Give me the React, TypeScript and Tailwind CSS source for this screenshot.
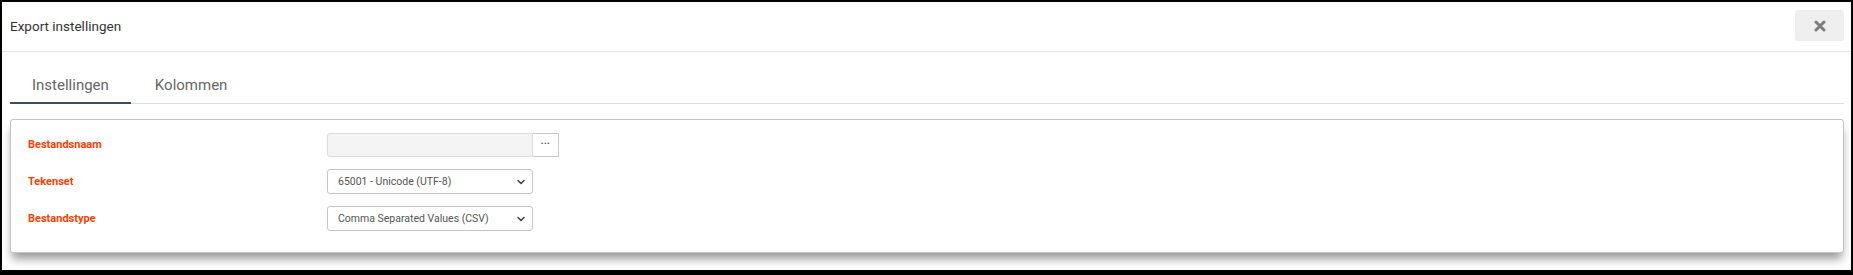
const FIELDS = [
  { label: "Bestandsnaam", kind: "file" as const, value: "" },
  { label: "Tekenset", kind: "select" as const, value: "65001 - Unicode (UTF-8)" },
  { label: "Bestandstype", kind: "select" as const, value: "Comma Separated Values (CSV)" },
];

function Chevron() {
  return (
    <svg width="10" height="10" viewBox="0 0 10 10" fill="none" className="shrink-0">
      <path d="M2 3.5L5 6.5l3-3" stroke="#444" strokeWidth="1.6" strokeLinecap="round" strokeLinejoin="round"/>
    </svg>
  );
}

function Field({ label, kind, value }: { label: string; kind: "file" | "select"; value: string }) {
  return (
    <div className="flex items-center h-[25px]">
      <div className="w-[299px] shrink-0 text-[11px] font-bold text-[#ff3d00] pt-[2px]">{label}</div>
      {kind === "file" ? (
        <div className="flex h-[24px]">
          <div className="w-[206px] h-full bg-[#f4f4f4] border border-[#dcdcdc] rounded-l-[3px]"/>
          <button className="w-[26px] h-full bg-white border border-l-0 border-[#c8c8c8] text-[#555] text-[8px] leading-none tracking-[0.5px] pb-[2px]">•••</button>
        </div>
      ) : (
        <div className="w-[206px] h-full flex items-center justify-between pl-[10px] pr-[6px] bg-white border border-[#c6c6c6] rounded-[3px] text-[10.5px] text-[#555]">
          <span>{value}</span>
          <Chevron/>
        </div>
      )}
    </div>
  );
}

export default function App() {
  return (
    <div className="h-[275px] bg-black pt-[2px] px-[2px] pb-[5px]" style={{ fontFamily: "Roboto, 'Liberation Sans', sans-serif" }}>
      <div className="h-full bg-white flex flex-col">
        <div className="h-[50px] shrink-0 border-b border-[#e3e3e3] flex items-center justify-between pl-[8px] pr-[7px]">
          <div className="text-[13.5px] text-[#333]">Export instellingen</div>
          <button aria-label="Sluiten" className="w-[49px] h-[31px] mt-[-2px] bg-[#efefef] rounded-[3px] flex items-center justify-center">
            <svg width="12" height="12" viewBox="0 0 12 12">
              <path d="M2 2l8 8M10 2l-8 8" stroke="#7d7d7d" strokeWidth="3" strokeLinecap="round"/>
            </svg>
          </button>
        </div>

        <div className="mx-[8px] mr-[7px] mt-[15px] flex border-b border-[#dedede]">
          <div className="px-[22px] pt-[8px] pb-[7px] text-[15px] leading-[20px] text-[#666] border-b-2 border-[#3d4b5a] -mb-px">Instellingen</div>
          <div className="pl-[24px] pr-[22px] pt-[8px] pb-[7px] text-[15px] leading-[20px] text-[#666]">Kolommen</div>
        </div>

        <div className="ml-[8px] mr-[7px] mt-[15px] h-[134px] border border-[#c4c4c4] rounded-[3px] bg-white shadow-[0_8px_10px_-2px_rgba(0,0,0,0.4)] pt-[12px] pl-[17px] flex flex-col gap-[12px]">
          {FIELDS.map(f => <Field key={f.label} {...f}/>)}
        </div>
      </div>
    </div>
  );
}
